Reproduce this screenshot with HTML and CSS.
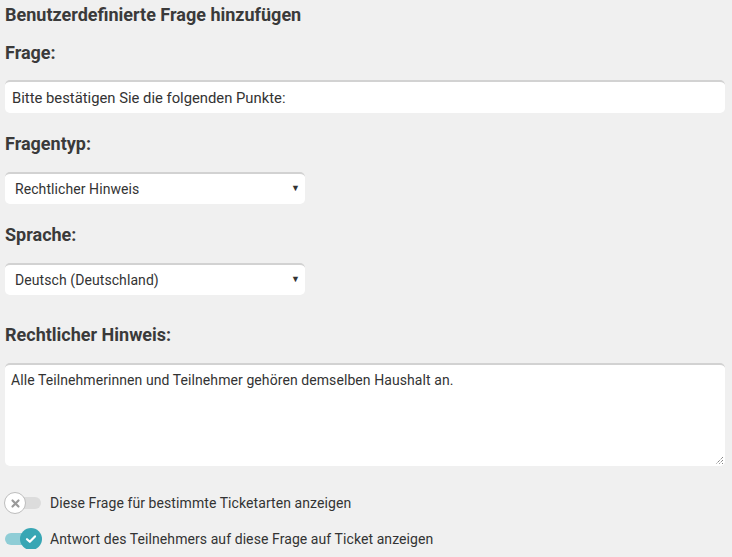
FILE: index.html
```html
<!DOCTYPE html>
<html lang="de">
<head>
<meta charset="utf-8">
<link rel="stylesheet" href="styles.css">
</head>
<body>
<div class="form">
  <h3 class="title">Benutzerdefinierte Frage hinzufügen</h3>
  <label class="label label-first">Frage:</label>
  <div class="input">Bitte bestätigen Sie die folgenden Punkte:</div>
  <label class="label">Fragentyp:</label>
  <div class="select"><span>Rechtlicher Hinweis</span><span class="caret">▼</span></div>
  <label class="label">Sprache:</label>
  <div class="select"><span>Deutsch (Deutschland)</span><span class="caret">▼</span></div>
  <label class="label label-gap">Rechtlicher Hinweis:</label>
  <div class="textarea">Alle Teilnehmerinnen und Teilnehmer gehören demselben Haushalt an.
    <svg class="grip" width="9" height="9" viewBox="0 0 9 9"><path d="M8 1L1 8M8 4L4 8M8 7L7 8" stroke="#555" stroke-width="1" stroke-dasharray="1 1"/></svg>
  </div>
  <div class="toggle-row">
    <span class="switch off"><span class="knob"><svg width="11" height="11" viewBox="0 0 11 11"><path d="M2.5 2.5L8.5 8.5M8.5 2.5L2.5 8.5" stroke="#9a9a9a" stroke-width="2.2" stroke-linecap="round"/></svg></span></span>
    <span class="toggle-text">Diese Frage für bestimmte Ticketarten anzeigen</span>
  </div>
  <div class="toggle-row">
    <span class="switch on"><span class="knob"><svg width="12" height="10" viewBox="0 0 12 10"><path d="M2 5.2L4.8 7.8L10 2.4" fill="none" stroke="#fff" stroke-width="2.2" stroke-linecap="round" stroke-linejoin="round"/></svg></span></span>
    <span class="toggle-text">Antwort des Teilnehmers auf diese Frage auf Ticket anzeigen</span>
  </div>
</div>
</body>
</html>
```
FILE: styles.css
```css
html, body {
  margin: 0;
  padding: 0;
  background: #f0f0f0;
}
body {
  font-family: Roboto, "Liberation Sans", sans-serif;
  color: #333;
}
.form {
  padding: 4px 7px 0 5px;
  display: flex;
  flex-direction: column;
}
.title {
  margin: 0;
  font-size: 18px;
  font-weight: 700;
  line-height: 21px;
  color: #3a3a3a;
}
.label {
  display: block;
  font-size: 18px;
  font-weight: 700;
  color: #3a3a3a;
  line-height: 21px;
  margin-top: 20px;
  margin-bottom: 18px;
}
.label-first {
  margin-top: 17px;
  margin-bottom: 17px;
}
.label-gap {
  margin-top: 29px;
}
.input, .select, .textarea {
  background: #fff;
  border-radius: 5px;
  border-top: 2px solid #d2d2d2;
  box-sizing: border-box;
  font-size: 14px;
  letter-spacing: 0.08px;
  color: #333;
}
.input {
  height: 33px;
  padding: 8px 6px 0 7px;
  font-size: 14.8px;
  letter-spacing: 0;
  line-height: 17px;
}
.select {
  width: 300px;
  height: 32px;
  padding: 7px 5px 0 10px;
  line-height: 17px;
  display: flex;
  justify-content: space-between;
}
.caret {
  font-size: 9px;
  line-height: 12px;
  color: #333;
  padding-top: 1px;
}
.textarea {
  height: 103px;
  padding: 7px 6px 0 6px;
  line-height: 17px;
  position: relative;
}
.grip {
  position: absolute;
  right: 1px;
  bottom: 1px;
}
.toggle-row {
  display: flex;
  align-items: center;
  gap: 9px;
  height: 20px;
  font-size: 14px;
  letter-spacing: 0.08px;
  color: #333;
}
.textarea + .toggle-row {
  margin-top: 27px;
}
.toggle-row + .toggle-row {
  margin-top: 16px;
}
.switch {
  position: relative;
  width: 36px;
  height: 12px;
  border-radius: 6px;
  flex: none;
}
.switch.off { background: #dcdcdc; }
.switch.on { background: #8fcdd6; }
.knob {
  position: absolute;
  top: -5px;
  width: 22px;
  height: 22px;
  border-radius: 50%;
  box-sizing: border-box;
  display: flex;
  align-items: center;
  justify-content: center;
}
.switch.off .knob {
  left: -1px;
  background: #fff;
  border: 1px solid #bdbdbd;
}
.switch.on .knob {
  right: -1px;
  background: #38a6b4;
}
```
